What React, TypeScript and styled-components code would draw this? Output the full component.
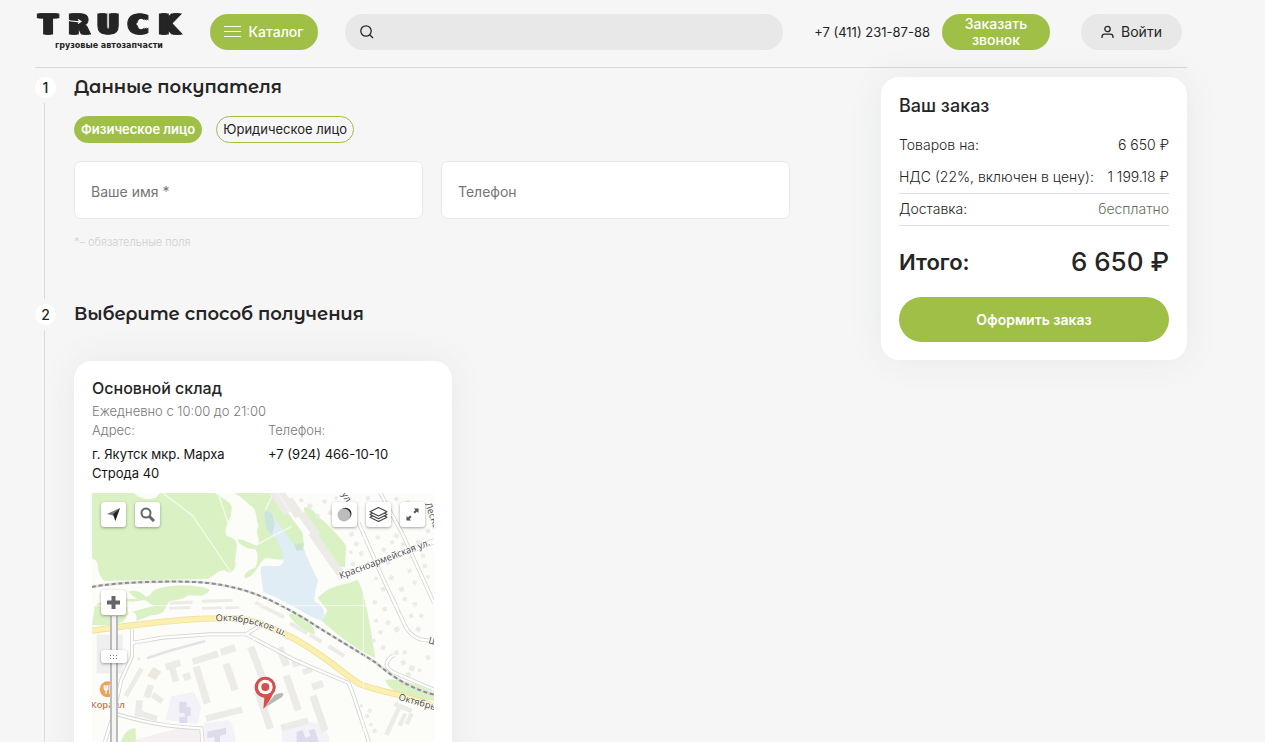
import React, { useState } from 'react';
import styled, { createGlobalStyle } from 'styled-components';

const GlobalStyle = createGlobalStyle`
  * { box-sizing: border-box; }
  body {
    margin: 0;
    background: #f6f6f6;
    color: #252525;
    font-family: Inter, "Liberation Sans", sans-serif;
    font-size: 14px;
  }
  button, input { font-family: inherit; }
  h1, h2, h3, p, dl, dt, dd { margin: 0; }
`;

const green = '#9fbf47';

const Page = styled.div`
  padding: 0 78px 0 35px;
`;

const Header = styled.header`
  display: flex;
  align-items: center;
  height: 68px;
  padding: 0 5px 4px 0;
  border-bottom: 1px solid #d6d9d8;
`;

const LogoLink = styled.a`
  display: block;
  width: 148px;
  height: 36px;
  margin-right: 27px;
  flex: none;
  svg { display: block; overflow: visible; }
`;

const Wordmark = styled.g`
  filter: drop-shadow(2px 0 0 #252525) drop-shadow(-2px 0 0 #252525);
`;

const PillButton = styled.button<{ $muted?: boolean; $width: number }>`
  display: flex;
  align-items: center;
  justify-content: center;
  gap: 7px;
  flex: none;
  width: ${(p) => p.$width}px;
  height: 36px;
  padding: 0;
  border: 0;
  border-radius: 18px;
  background: ${(p) => (p.$muted ? '#e8e8e8' : green)};
  color: ${(p) => (p.$muted ? '#252525' : '#fff')};
  font-size: 14px;
  font-weight: ${(p) => (p.$muted ? 400 : 500)};
  line-height: 16px;
  cursor: pointer;
`;

const SearchForm = styled.form`
  display: flex;
  align-items: center;
  flex: 1;
  height: 36px;
  margin: 0 31px 0 27px;
  padding: 0 15px;
  border-radius: 18px;
  background: #e8e8e8;
`;

const SearchInput = styled.input`
  flex: 1;
  min-width: 0;
  margin-left: 8px;
  border: 0;
  outline: 0;
  background: transparent;
  font-size: 14px;
`;

const HeaderPhone = styled.a`
  margin-right: 12px;
  color: #252525;
  font-size: 13px;
  text-decoration: none;
  white-space: nowrap;
`;

const HeaderGap = styled.span`
  width: 31px;
  flex: none;
`;

const Columns = styled.main`
  display: flex;
  align-items: flex-start;
  justify-content: space-between;
  gap: 91px;
  padding-top: 9px;
`;

const Steps = styled.div`
  flex: 1;
  min-width: 0;
`;

const Step = styled.section`
  display: flex;
  gap: 18px;
`;

const StepRail = styled.div`
  display: flex;
  flex-direction: column;
  align-items: center;
  gap: 5px;
  width: 21px;
  padding-bottom: 5px;
  flex: none;
  &::after {
    content: '';
    flex: 1;
    width: 1px;
    margin-right: 2px;
    background: #d9dadb;
  }
`;

const StepNumber = styled.span`
  display: flex;
  align-items: center;
  justify-content: center;
  width: 21px;
  height: 21px;
  border-radius: 50%;
  background: #fff;
  font-size: 14px;
  font-weight: 500;
`;

const StepBody = styled.div<{ $bottom: number }>`
  flex: 1;
  min-width: 0;
  padding-bottom: ${(p) => p.$bottom}px;
`;

const StepTitle = styled.h2`
  font-family: "Montserrat Alternates", Montserrat, Inter, sans-serif;
  font-size: 18px;
  font-weight: 600;
  line-height: 20px;
`;

const Toggles = styled.div`
  display: flex;
  gap: 14px;
  margin-top: 19px;
`;

const Toggle = styled.button<{ $active: boolean }>`
  height: 27px;
  padding: 0 6px 2px;
  border: 1px solid ${green};
  border-radius: 14px;
  background: ${(p) => (p.$active ? green : 'transparent')};
  color: ${(p) => (p.$active ? '#fff' : '#252525')};
  font-size: 13px;
  font-weight: ${(p) => (p.$active ? 600 : 400)};
  cursor: pointer;
`;

const Fields = styled.div`
  display: grid;
  grid-template-columns: 1fr 1fr;
  gap: 18px;
  margin-top: 18px;
`;

const Field = styled.input`
  width: 100%;
  height: 58px;
  padding: 2px 16px 0;
  border: 1px solid #e8e8e8;
  border-radius: 7px;
  background: #fff;
  font-size: 14px;
  &::placeholder { color: #757575; opacity: 1; }
`;

const Note = styled.p`
  margin-top: 16px;
  color: #d0cfcf;
  font-size: 11px;
  font-weight: 300;
  line-height: 14px;
`;

const Card = styled.div`
  border-radius: 18px;
  background: #fff;
  box-shadow: 0 0 36px rgba(40, 50, 90, 0.07);
  padding: 18px;
`;

const StoreCard = styled(Card)`
  width: 378px;
  margin-top: 37px;
`;

const StoreName = styled.h3`
  font-size: 16px;
  font-weight: 500;
  line-height: 19px;
`;

const StoreHours = styled.p`
  margin-top: 4px;
  color: #777;
  font-size: 13px;
  font-weight: 300;
  line-height: 19px;
`;

const StoreFacts = styled.dl`
  display: grid;
  grid-template-columns: 158px 1fr;
  column-gap: 18px;
  margin-bottom: 10px;
  font-size: 13px;
  line-height: 19px;
  dt { color: #777; font-weight: 300; }
  dd { margin-top: 5px; color: #151515; }
`;

const OrderCard = styled(Card)`
  width: 306px;
  flex: none;
`;

const OrderTitle = styled.h2`
  margin-bottom: 13px;
  font-size: 18px;
  font-weight: 500;
  line-height: 22px;
`;

const OrderRow = styled.div<{ $ruled?: boolean }>`
  display: flex;
  justify-content: space-between;
  height: 32px;
  border-bottom: ${(p) => (p.$ruled ? '1px solid #dfe1e1' : '0')};
  font-size: 14px;
  font-weight: 300;
  line-height: 29px;
  white-space: nowrap;
`;

const Free = styled.span`
  color: #5f705b;
`;

const TotalRow = styled.div`
  display: flex;
  align-items: center;
  justify-content: space-between;
  height: 71px;
  font-size: 22px;
  font-weight: 600;
`;

const TotalSum = styled.span`
  font-size: 26px;
  font-weight: 500;
`;

const SubmitButton = styled.button`
  display: block;
  width: 100%;
  height: 45px;
  border: 0;
  border-radius: 23px;
  background: ${green};
  color: #fff;
  font-size: 14px;
  font-weight: 600;
  cursor: pointer;
`;

const MapFrame = styled.div`
  position: relative;
  height: 342px;
  overflow: hidden;
  > svg { display: block; }
`;

const MapButton = styled.button<{ $side: 'left' | 'right'; $offset: number; $top: number }>`
  position: absolute;
  top: ${(p) => p.$top}px;
  ${(p) => p.$side}: ${(p) => p.$offset}px;
  display: flex;
  align-items: center;
  justify-content: center;
  width: 25px;
  height: 25px;
  padding: 0;
  border: 0;
  border-radius: 3px;
  background: #fff;
  box-shadow: 0 1px 3px rgba(0, 0, 0, 0.35);
  cursor: pointer;
`;

const ZoomRange = styled.input`
  position: absolute;
  top: 123px;
  left: 9px;
  width: 26px;
  height: 160px;
  margin: 0;
  appearance: none;
  background: linear-gradient(90deg, transparent 9px, #bbb 9px, #bbb 11px, #f4f4f2 11px, #f4f4f2 15px, #bbb 15px, #bbb 17px, transparent 17px);
  writing-mode: vertical-lr;
  &::-webkit-slider-thumb {
    appearance: none;
    width: 26px;
    height: 13px;
    border-radius: 3px;
    background:
      repeating-linear-gradient(90deg, #777 0 1px, #fff 1px 3px) 9px 5px / 9px 1px no-repeat,
      repeating-linear-gradient(90deg, #777 0 1px, #fff 1px 3px) 9px 8px / 9px 1px no-repeat,
      #fff;
    box-shadow: 0 1px 3px rgba(0, 0, 0, 0.35);
  }
`;

const Logo = () => (
  <svg width="148" height="36" viewBox="0 0 148 36" role="img" aria-label="TRUCK грузовые автозапчасти">
    <Wordmark fill="#252525" stroke="#252525" strokeWidth="1" fontFamily="DejaVu Sans" fontWeight="700" fontSize="26" textAnchor="middle">
      <text x="13" y="20">T</text>
      <text x="44" y="20">R</text>
      <text x="73" y="20">U</text>
      <text x="103" y="20">C</text>
      <text x="134" y="20">K</text>
    </Wordmark>
    <g fill="none" stroke="#f6f6f6" strokeWidth="1.2">
      <path d="M30 5Q36 8 45 7.500M43 5.500L46 7.500L43 9.500" />
      <path d="M118 13Q112 9.500 103 10M105 8L102 10L105 12" />
    </g>
    <text x="74" y="34" fill="#252525" fontFamily="DejaVu Sans" fontWeight="700" fontSize="8" textAnchor="middle">
      грузовые автозапчасти
    </text>
  </svg>
);

type Block = [number, number, number, number, number];

/* x, y, width, height, rotation */
const blocks: Block[] = [
  [232, 324, 70, 10, -2], [330, 319, 92, 9, -2], [232, 340, 64, 9, -2], [330, 341, 60, 8, -2], [400, 340, 42, 8, -2],
  [318, 518, 22, 116, -17], [405, 510, 22, 84, -19], [300, 484, 80, 20, -17], [385, 460, 46, 22, -17],
  [485, 458, 22, 112, -21], [562, 462, 22, 58, -21], [505, 590, 22, 120, -19], [590, 545, 22, 110, -19],
  [670, 605, 22, 112, -19], [600, 502, 30, 18, -20], [632, 524, 28, 18, -20], [660, 566, 34, 22, -20],
  [340, 654, 112, 19, -14], [566, 684, 84, 20, -15], [220, 506, 46, 20, -17], [236, 524, 20, 42, -17],
  [274, 540, 22, 22, -20], [130, 622, 20, 50, 5], [140, 660, 56, 18, 18], [160, 575, 20, 40, 20],
  [178, 606, 36, 18, 35], [118, 520, 14, 96, 30], [640, 55, 24, 80, -35], [690, 105, 24, 150, -35],
  [580, -20, 20, 100, -35], [550, -20, 20, 90, -35], [610, 10, 18, 90, -35],
  [485, 345, 96, 11, 27], [590, 400, 60, 12, 30], [650, 430, 42, 12, 32], [705, 468, 56, 12, 32],
  [895, 640, 14, 90, 25], [905, 636, 56, 14, 22], [925, 660, 13, 40, 25], [945, 660, 13, 36, 25],
];

/* small houses of the private sector: x, y, size */
const houses: [number, number, number][] = [
  [620, 18, 12], [650, 30, 14], [690, 22, 12], [712, 50, 14], [670, 65, 11], [730, 8, 10], [820, 12, 12], [852, 60, 12],
  [770, 120, 13], [790, 145, 13], [800, 178, 14], [825, 205, 13], [770, 175, 10], [780, 205, 12], [850, 130, 12],
  [872, 162, 13], [893, 145, 11], [910, 120, 13], [925, 150, 12], [940, 170, 10], [880, 205, 13], [895, 245, 14],
  [865, 285, 13], [850, 250, 10], [920, 285, 14], [845, 320, 12], [870, 345, 13], [885, 380, 13], [905, 405, 15],
  [935, 310, 12], [960, 330, 14], [985, 360, 12], [950, 365, 12], [975, 400, 14], [945, 230, 12], [965, 260, 12],
  [990, 215, 13], [1005, 245, 10], [985, 185, 12], [910, 10, 12], [940, 25, 13], [962, 50, 12], [1000, 110, 13],
  [975, 140, 12], [845, 380, 11], [862, 410, 12], [838, 440, 11], [870, 455, 13], [905, 475, 13], [935, 470, 12],
  [925, 505, 14], [955, 515, 16], [940, 540, 14], [980, 525, 11], [1000, 490, 13], [830, 645, 12], [818, 665, 12],
  [834, 688, 10], [840, 710, 12], [806, 632, 10], [60, 560, 9], [138, 492, 8],
];

const MapArt = () => (
  <svg width="342" height="400" viewBox="0 0 1026 1200" aria-hidden="true">
    <rect width="1026" height="1200" fill="#fcfcf8" />
    <g fill="#daf1c4">
      <path d="M0 0H125C140 14 165 24 190 14L206 0H368C395 20 425 28 418 52C420 75 400 90 401 118C400 135 418 128 430 142C442 160 425 190 431 212C430 235 410 245 402 234C380 222 360 262 335 258C240 260 120 262 36 264C25 250 20 240 18 225C18 205 12 200 0 198Z" />
      <path d="M425 0H530L590 62L632 120L636 160L570 200L520 195C500 210 490 250 460 256C452 245 465 232 490 224C500 195 500 165 480 168C460 165 435 150 438 140C450 135 465 150 495 158C510 140 485 120 500 100C490 70 495 50 478 40C455 20 440 5 425 0Z" />
      <path d="M636 44C660 40 670 65 695 85C715 105 758 145 762 160L759 222C735 228 715 185 700 170C680 150 650 100 640 70Z" />
      <path d="M677 315C720 270 755 280 795 260C815 280 832 380 850 495C800 475 740 430 690 385L706 352Z" />
      <path d="M590 364C615 355 665 385 669 424C645 420 600 390 590 364Z" />
      <path d="M8 340C30 318 60 315 102 317C135 320 175 315 180 297C210 270 330 275 352 290C345 312 305 310 290 306C275 320 245 322 232 324C215 350 220 365 180 366L132 384C140 360 120 350 108 362C95 400 55 398 0 396Z" />
      <path d="M110 295C130 290 150 296 165 316L160 325C140 320 118 310 110 295Z" />
      <path d="M880 560C930 555 980 575 1026 600V624C960 615 890 600 880 560Z" />
      <path d="M85 750C95 725 105 705 132 707C125 725 145 745 120 765Z" />
    </g>
    <path d="M517 58C535 48 545 62 550 82C565 100 605 150 615 170C635 165 635 160 640 180C650 205 660 225 678 262C672 290 662 320 670 328C690 335 704 355 692 384C650 375 600 330 515 298C510 270 505 245 507 222C530 210 560 232 575 208C572 180 565 150 540 125C520 110 520 90 517 58Z" fill="#e0edf4" />
    <path d="M517 58C535 48 545 62 548 95L540 125C520 110 520 90 517 58ZM606 155L634 150V172L614 173Z" fill="#c2dfd2" opacity="0.7" />
    <path d="M108 360L106 325C130 330 155 315 165 325L185 340L160 345Z" fill="#fcfcf8" />
    <g fill="none" stroke="#f5fae9" strokeWidth="4">
      <path d="M212 0L302 68L418 240M378 0L410 95M495 155L550 125L600 100M520 50L545 0" />
    </g>
    <rect x="14" y="425" width="78" height="116" fill="#eeefee" />
    <g fill="#f3f2f8">
      <path d="M238 610L305 597L327 640L318 692L220 680Z" />
      <path d="M335 690L410 682Q430 700 430 747V1200H340Z" />
      <path d="M570 712L650 688Q700 685 712 740V1200H560Z" />
    </g>
    <path d="M205 720L260 706H325L332 900H130V740Z" fill="#f7f0f3" />
    <g fill="#dedbea">
      <path d="M262 626H284V642H296V668H286V690H262V672H278V660H262Z" />
      <path d="M346 716L402 704V724L384 728V760H368V732L346 736Z" />
      <path d="M614 716L632 712L640 734L656 730L650 712L668 708L684 760H614Z" />
    </g>
    <g fill="#edebe8">
      {blocks.map(([x, y, w, h, r], i) => (
        <rect key={i} x={x} y={y} width={w} height={h} transform={`rotate(${r} ${x + w / 2} ${y + h / 2})`} />
      ))}
      {houses.map(([x, y, s], i) => (
        <rect key={`h${i}`} x={x} y={y} width={s} height={s} transform={`rotate(${i % 2 ? 24 : -20} ${x} ${y})`} />
      ))}
    </g>
    <path d="M165 548L185 522L208 536L190 562Z" fill="#efe8df" />
    <g fill="none" strokeLinejoin="round">
      <g stroke="#d5d5d4" strokeWidth="12">
        <path d="M120 408V490L88 560L65 660L35 760M120 450L210 434L350 424H462L610 502L770 570L782 600L835 760M462 424L500 400" />
        <path d="M62 660C130 680 200 700 328 706L334 780" />
        <path d="M800 90L870 250L940 400Q965 445 1015 442" />
        <path d="M865 0L930 120L1026 330" />
        <path d="M905 486C870 510 880 530 920 545L1026 590" />
      </g>
      <path d="M165 496L230 474L340 444" stroke="#e3e3e8" strokeWidth="8" />
      <g stroke="#fff" strokeWidth="7">
        <path d="M120 408V490L88 560L65 660L35 760M120 450L210 434L350 424H462L610 502L770 570L782 600L835 760M462 424L500 400" />
        <path d="M62 660C130 680 200 700 328 706L334 780" />
        <path d="M800 90L870 250L940 400Q965 445 1015 442" />
        <path d="M865 0L930 120L1026 330" />
        <path d="M905 486C870 510 880 530 920 545L1026 590" />
      </g>
      <path d="M740 252L1026 145" stroke="#d9d9d9" strokeWidth="18" />
      <path d="M740 252L1026 145" stroke="#fff" strokeWidth="14" />
      <path d="M0 413C100 400 230 378 370 376C480 368 540 405 600 434C680 475 740 530 800 572C850 595 930 600 1026 640" stroke="#f1df9c" strokeWidth="19" />
      <path d="M0 413C100 400 230 378 370 376C480 368 540 405 600 434C680 475 740 530 800 572C850 595 930 600 1026 640" stroke="#fbf0b0" strokeWidth="14" />
      <path d="M0 282C80 265 280 262 350 270C470 285 540 320 640 378C720 430 790 470 850 508C900 550 950 585 1026 605" stroke="#dddedd" strokeWidth="8" />
      <path d="M0 282C80 265 280 262 350 270C470 285 540 320 640 378C720 430 790 470 850 508C900 550 950 585 1026 605" stroke="#8c8e8d" strokeWidth="6" strokeDasharray="12 8" />
      <path d="M0 338H1026M814 0V1200" stroke="#fff" strokeWidth="2" />
    </g>
    <defs>
      <path id="road-main" d="M371 385C450 380 520 398 610 446" />
      <path id="road-army" d="M746 258L1026 152" />
      <path id="road-east" d="M918 620L1180 695" />
      <path id="road-forest" d="M998 32L1045 160" />
      <path id="road-north" d="M748 4L790 70" />
    </defs>
    <g fill="#444" fontFamily="Open Sans" fontWeight="500" fontSize="28" stroke="#fff" strokeWidth="4" paintOrder="stroke">
      <text><textPath href="#road-main">Октябрьское ш.</textPath></text>
      <text><textPath href="#road-army">Красноармейская ул.</textPath></text>
      <text><textPath href="#road-east">Октябрьское ш.</textPath></text>
      <text><textPath href="#road-forest">Лесная</textPath></text>
      <text><textPath href="#road-north">ул.</textPath></text>
      <text x="1008" y="450" transform="rotate(15 1008 450)">Ш</text>
    </g>
    <circle cx="47" cy="589" r="24" fill="#eda25f" />
    <path d="M37 577V588Q42 594 47 588V577M42 577V602M54 602V577Q62 582 58 592H54" stroke="#fff" strokeWidth="4" fill="none" />
    <text x="-4" y="644" fill="#c8793a" stroke="#fff" strokeWidth="4" paintOrder="stroke" fontFamily="Open Sans" fontWeight="600" fontSize="28">Коралл</text>
    <path d="M516 646L548 606Q584 592 570 612Z" fill="#666" opacity="0.45" />
    <path d="M514 648L517 614A31 31 0 1 1 542 604Q536 622 514 648Z" fill="#d4504c" />
    <circle cx="520" cy="582" r="31" fill="#d4504c" />
    <circle cx="520" cy="582" r="22" fill="#fff" />
    <circle cx="520" cy="582" r="12" fill="#d4504c" />
  </svg>
);

const StoreMap = () => (
  <MapFrame>
    <MapArt />
    <MapButton type="button" aria-label="Моё местоположение" $side="left" $offset={9} $top={9}>
      <svg width="15" height="15" viewBox="0 0 16 16"><path d="M1 7.500L15 1L7.500 9Z" fill="#777" /><path d="M15 1L10 15L7.500 8Z" fill="#222" /></svg>
    </MapButton>
    <MapButton type="button" aria-label="Найти на карте" $side="left" $offset={43} $top={9}>
      <svg width="15" height="15" viewBox="0 0 15 15" fill="none" stroke="#666"><circle cx="6" cy="6" r="4.500" strokeWidth="2" /><path d="M9 9L14 14" strokeWidth="3" /></svg>
    </MapButton>
    <MapButton type="button" aria-label="Панорамы" $side="right" $offset={77} $top={9}>
      <svg width="15" height="15" viewBox="0 0 15 15"><circle cx="8.500" cy="6.800" r="6" fill="#222" /><circle cx="7" cy="8" r="6.500" fill="#bcbcbc" /></svg>
    </MapButton>
    <MapButton type="button" aria-label="Слои" $side="right" $offset={43} $top={9}>
      <svg width="19" height="17" viewBox="0 0 20 18" fill="#fff" stroke="#444" strokeWidth="1.200" strokeLinejoin="round"><path d="M1 12L10 16.500L19 12L10 7.500Z" /><path d="M1 9L10 13.500L19 9L10 4.500Z" /><path d="M1 6L10 10.500L19 6L10 1.500Z" /></svg>
    </MapButton>
    <MapButton type="button" aria-label="На весь экран" $side="right" $offset={9} $top={9}>
      <svg width="13" height="13" viewBox="0 0 14 14" fill="#555"><path d="M8.500 0.500H13.500V5.500L11.800 3.800L9.600 6L8 4.400L10.200 2.200ZM5.500 13.500H0.500V8.500L2.200 10.200L4.400 8L6 9.600L3.800 11.800Z" /></svg>
    </MapButton>
    <ZoomRange type="range" aria-label="Масштаб" min={0} max={147} defaultValue={34} />
    <MapButton type="button" aria-label="Приблизить" $side="left" $offset={9} $top={97}>
      <svg width="13" height="13" viewBox="0 0 13 13" stroke="#666" strokeWidth="4"><path d="M6.500 0V13M0 6.500H13" /></svg>
    </MapButton>
  </MapFrame>
);

export default function App() {
  const [person, setPerson] = useState<'private' | 'company'>('private');

  return (
    <>
      <GlobalStyle />
      <Page>
        <Header>
          <LogoLink href="#"><Logo /></LogoLink>
          <PillButton type="button" $width={108}>
            <svg width="17" height="11" viewBox="0 0 17 11" stroke="#fff"><path d="M0 0.500H17M0 5.500H17M0 10.500H17" /></svg>
            Каталог
          </PillButton>
          <SearchForm role="search" onSubmit={(e) => e.preventDefault()}>
            <svg width="14" height="14" viewBox="0 0 14 14" fill="none" stroke="#252525" strokeWidth="1.300"><circle cx="6" cy="6" r="5.200" /><path d="M9.700 9.700L13 13" /></svg>
            <SearchInput type="search" aria-label="Поиск" />
          </SearchForm>
          <HeaderPhone href="tel:+74112318788">+7 (411) 231-87-88</HeaderPhone>
          <PillButton type="button" $width={108}>Заказать<br />звонок</PillButton>
          <HeaderGap />
          <PillButton type="button" $muted $width={101}>
            <svg width="13" height="14" viewBox="0 0 13 14" fill="none" stroke="#252525" strokeWidth="1.300"><circle cx="6.500" cy="4" r="2.700" /><path d="M1 13V12Q1 9.200 3.800 9.200H9.200Q12 9.200 12 12V13" /></svg>
            Войти
          </PillButton>
        </Header>

        <Columns>
          <Steps>
            <Step>
              <StepRail><StepNumber>1</StepNumber></StepRail>
              <StepBody $bottom={55}>
                <StepTitle>Данные покупателя</StepTitle>
                <Toggles>
                  <Toggle type="button" aria-pressed={person === 'private'} $active={person === 'private'} onClick={() => setPerson('private')}>
                    Физическое лицо
                  </Toggle>
                  <Toggle type="button" aria-pressed={person === 'company'} $active={person === 'company'} onClick={() => setPerson('company')}>
                    Юридическое лицо
                  </Toggle>
                </Toggles>
                <Fields>
                  <Field type="text" aria-label="Ваше имя" placeholder="Ваше имя *" />
                  <Field type="tel" aria-label="Телефон" placeholder="Телефон" />
                </Fields>
                <Note>*– обязательные поля</Note>
              </StepBody>
            </Step>

            <Step>
              <StepRail><StepNumber>2</StepNumber></StepRail>
              <StepBody $bottom={40}>
                <StepTitle>Выберите способ получения</StepTitle>
                <StoreCard>
                  <StoreName>Основной склад</StoreName>
                  <StoreHours>Ежедневно с 10:00 до 21:00</StoreHours>
                  <StoreFacts>
                    <dt>Адрес:</dt>
                    <dt>Телефон:</dt>
                    <dd>г. Якутск мкр. Марха Строда 40</dd>
                    <dd>+7 (924) 466-10-10</dd>
                  </StoreFacts>
                  <StoreMap />
                </StoreCard>
              </StepBody>
            </Step>
          </Steps>

          <OrderCard as="aside">
            <OrderTitle>Ваш заказ</OrderTitle>
            <OrderRow><span>Товаров на:</span><span>6 650 ₽</span></OrderRow>
            <OrderRow $ruled><span>НДС (22%, включен в цену):</span><span>1 199.18 ₽</span></OrderRow>
            <OrderRow $ruled><span>Доставка:</span><Free>бесплатно</Free></OrderRow>
            <TotalRow><span>Итого:</span><TotalSum>6 650 ₽</TotalSum></TotalRow>
            <SubmitButton type="button">Оформить заказ</SubmitButton>
          </OrderCard>
        </Columns>
      </Page>
    </>
  );
}
